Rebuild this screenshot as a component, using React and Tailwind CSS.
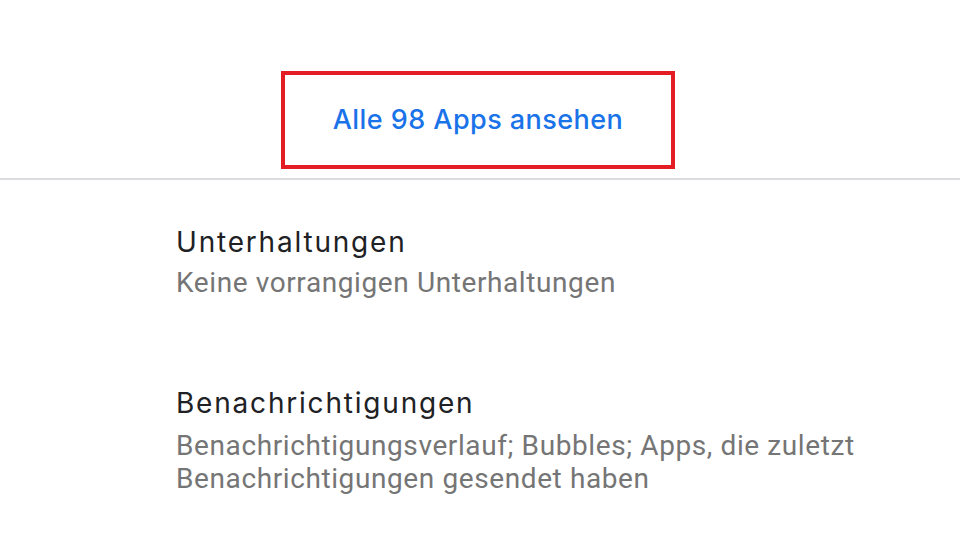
export default function App() {
  return (
    <div className="w-[960px] h-[540px] bg-white overflow-hidden">
      <div className="pt-[71px] pl-[281px]">
        <div className="w-[394px] h-[98px] border-4 border-[#e41c24] flex items-center justify-center">
          <span className="text-[#1a73e8] text-[27px] font-medium font-['Inter',sans-serif] tracking-[0.45px]">
            Alle 98 Apps ansehen
          </span>
        </div>
      </div>
      <div className="mt-[9px] h-[2px] bg-[#dadce0]" />
      <div className="pl-[176px] pt-[45px]">
        <div className="text-[28px] leading-[34px] text-[#202124] font-['Inter',sans-serif] tracking-[1.8px]">Unterhaltungen</div>
        <div className="mt-[7px] text-[28px] leading-[33px] text-[#757575] font-['Roboto',sans-serif] tracking-[0.6px]">Keine vorrangigen Unterhaltungen</div>
      </div>
      <div className="pl-[176px] pt-[87px]">
        <div className="text-[28px] leading-[34px] text-[#202124] font-['Inter',sans-serif] tracking-[1.8px]">Benachrichtigungen</div>
        <div className="mt-[9px] text-[28px] leading-[33px] text-[#757575] font-['Roboto',sans-serif] tracking-[0.6px]">
          Benachrichtigungsverlauf; Bubbles; Apps, die zuletzt
          <br />
          Benachrichtigungen gesendet haben
        </div>
      </div>
    </div>
  );
}
